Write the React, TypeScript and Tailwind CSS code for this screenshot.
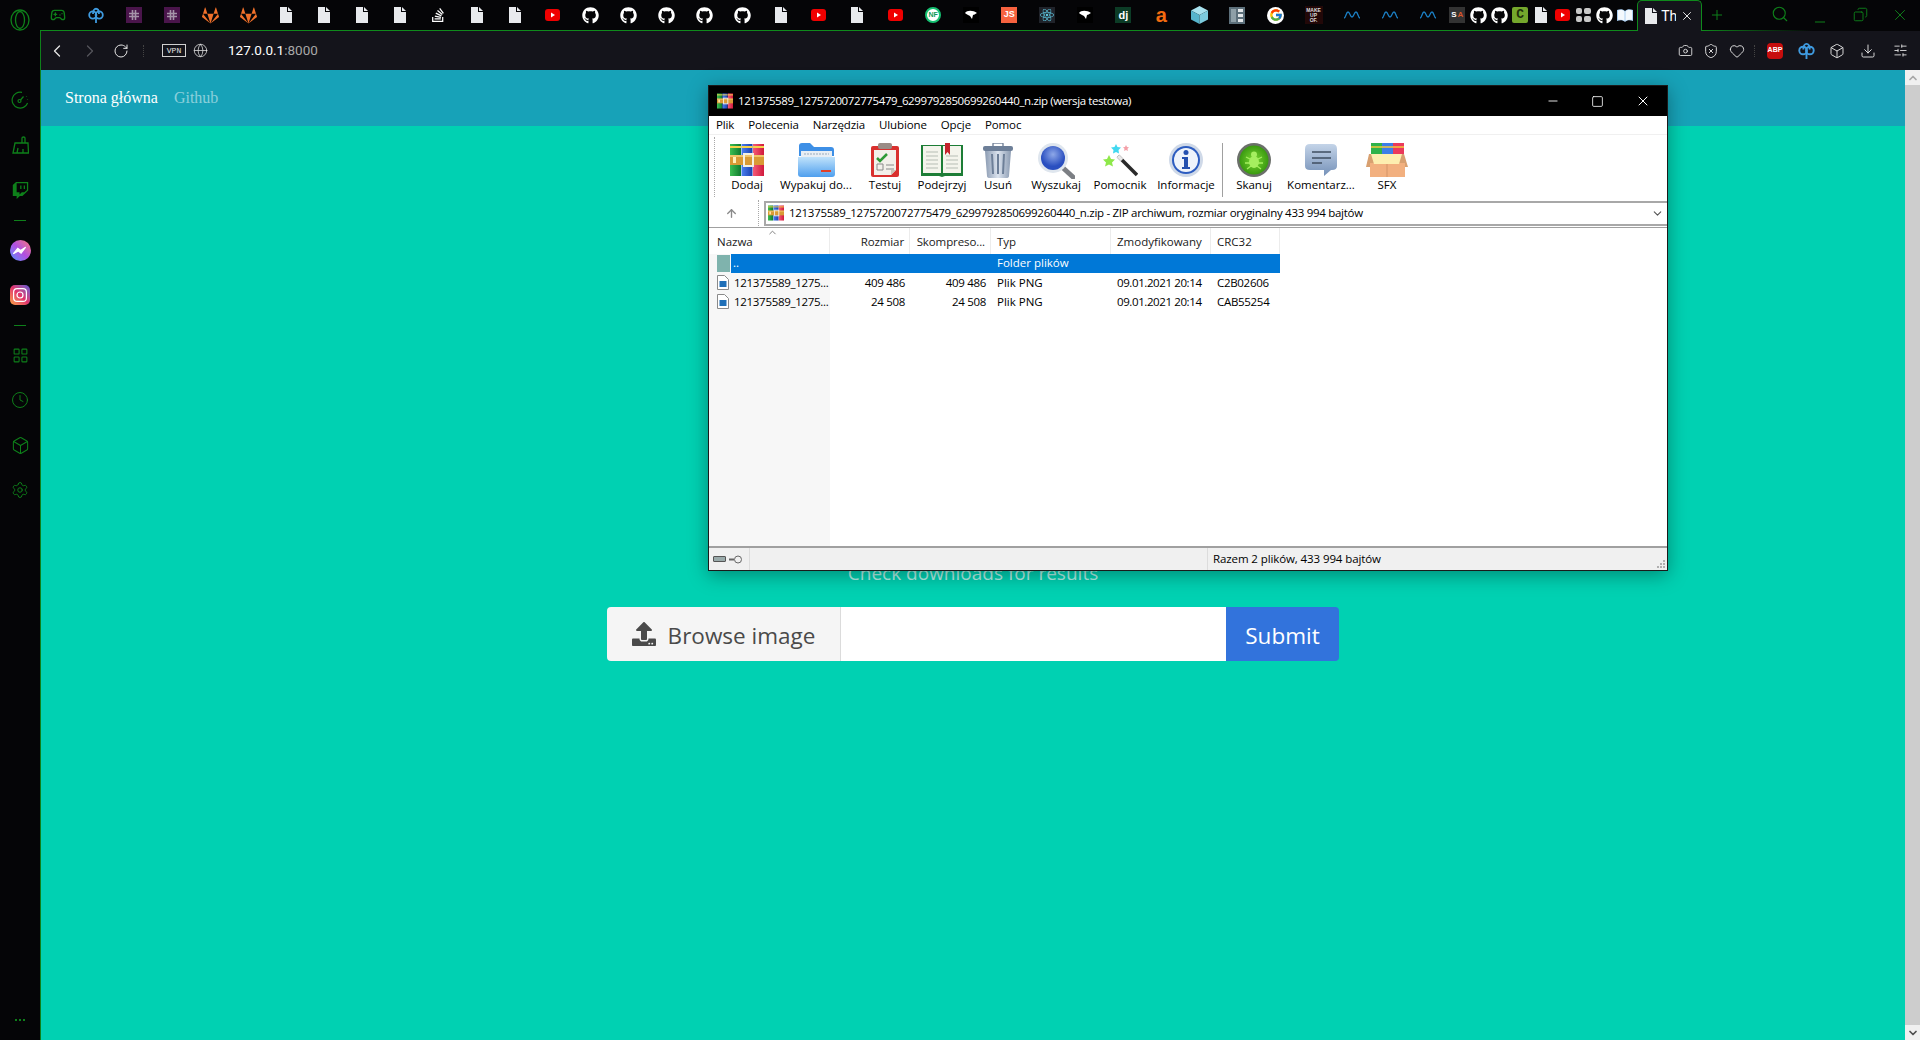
import { Box, ChevronDown, ChevronLeft, ChevronRight, ChevronUp, Clock, Download, Gamepad2, Globe, Heart, LayoutGrid, Minus, Plus, RotateCw, Search, Settings, SlidersHorizontal, ArrowUp, Camera, ShieldX, Square, X, Copy } from 'lucide-react'
import { FaGithub, FaGitlab, FaReact, FaStackOverflow, FaTwitch, FaUpload } from 'react-icons/fa'
import { FcGoogle } from 'react-icons/fc'

const green = '#0e801a'

// ---- small favicons for the tab strip ----

const Doc = () => (
  <svg width="12" height="16" viewBox="0 0 12 16">
    <path d="M0 0h7v5h5v11H0z" fill="#e8eaed" />
    <path d="M8 0l4 4H8z" fill="#e8eaed" />
  </svg>
)

const Yt = () => (
  <svg width="15" height="12" viewBox="0 0 15 12">
    <rect width="15" height="12" rx="3" fill="#f00000" />
    <path d="M6 3.5l4 2.5-4 2.5z" fill="#fff" />
  </svg>
)

const Gh = () => <FaGithub size={17} color="#fff" />

const Slack = () => (
  <div className="flex h-[16px] w-[16px] items-center justify-center bg-[#4a154b]">
    <svg width="10" height="10" viewBox="0 0 10 10" stroke="#a593a8" strokeWidth="1.6">
      <path d="M3.5 0v10M6.5 0v10M0 3.5h10M0 6.5h10" />
    </svg>
  </div>
)

const PCloud = ({ size = 16 }: { size?: number }) => (
  <svg width={size} height={size} viewBox="0 0 16 16" fill="none" stroke="#3f9be0" strokeWidth="1.8">
    <circle cx="4.8" cy="8" r="3.6" />
    <circle cx="11.2" cy="8" r="3.6" />
    <path d="M5 7c0-7 6-7 6 0M8 7v9" />
  </svg>
)

const Bird = () => (
  <div className="flex h-[16px] w-[16px] items-center justify-center bg-black">
    <svg width="12" height="10" viewBox="0 0 12 10">
      <path d="M0 3c2-3 8-3 12 0-2 1-3 2-4 2l-1 4-2-3C3 5 1 4 0 3z" fill="#fff" />
    </svg>
  </div>
)

const Wave = () => (
  <svg width="16" height="8" viewBox="0 0 16 8" fill="none" stroke="#1b7fc4" strokeWidth="1.3">
    <path d="M0 7c2 0 2-6 4-6s2 5 4 5 2-5 4-5 2 6 4 6" />
  </svg>
)

const CubeFav = () => (
  <svg width="17" height="18" viewBox="0 0 17 18">
    <path d="M8.5 0L17 4.500 8.500 9 0 4.500z" fill="#a8e2ee" />
    <path d="M0 4.500L8.500 9v9L0 13.500z" fill="#56b4cc" />
    <path d="M17 4.500L8.500 9v9l8.500-4.500z" fill="#7ccbdd" />
  </svg>
)

const Columns = () => (
  <svg width="16" height="17" viewBox="0 0 16 17">
    <rect width="16" height="17" fill="#5d707b" />
    <rect x="2" y="2" width="5" height="13" fill="#8fa0a8" />
    <rect x="9" y="2" width="5" height="3" fill="#e4e8ea" />
    <rect x="9" y="7" width="5" height="3" fill="#e4e8ea" />
    <rect x="9" y="12" width="5" height="3" fill="#e4e8ea" />
  </svg>
)

const BookFav = () => (
  <svg width="16" height="13" viewBox="0 0 16 13">
    <path d="M0 1c3-1 6-1 8 1 2-2 5-2 8-1v11c-3-1-6-1-8 1-2-2-5-2-8-1z" fill="#a9cdf0" />
    <path d="M1 1.500c3-.7 5-.5 6.500 1v9c-2-1-4-1-6.500-.7zM15 1.500c-3-.7-5-.5-6.500 1v9c2-1 4-1 6.500-.7z" fill="#f4f8fc" />
  </svg>
)

const GridFav = () => (
  <div className="grid h-[14px] w-[15px] grid-cols-2 gap-[2px]">
    <span className="rounded-[2px] bg-[#c8c8c8]" />
    <span className="rounded-[2px] bg-[#c8c8c8]" />
    <span className="rounded-[2px] bg-[#c8c8c8]" />
    <span className="rounded-[2px] bg-[#c8c8c8]" />
  </div>
)

// first part of the strip, evenly spaced
const wideTabs = [
  <Gamepad2 size={16} color={green} />,
  <PCloud />,
  <Slack />,
  <Slack />,
  <FaGitlab size={17} color="#f0702a" />,
  <FaGitlab size={17} color="#f0702a" />,
  <Doc />,
  <Doc />,
  <Doc />,
  <Doc />,
  <FaStackOverflow size={16} color="#fff" />,
  <Doc />,
  <Doc />,
  <Yt />,
  <Gh />,
  <Gh />,
  <Gh />,
  <Gh />,
  <Gh />,
  <Doc />,
  <Yt />,
  <Doc />,
  <Yt />,
  <div className="flex h-[16px] w-[16px] items-center justify-center rounded-full border-2 border-[#16c172] bg-white font-['Liberation_Sans',sans-serif] text-[7px] font-bold text-[#0c9a58]">NF</div>,
  <Bird />,
  <div className="flex h-[16px] w-[16px] items-center justify-center bg-[#f7623f] font-['Liberation_Sans',sans-serif] text-[9px] font-bold text-white">JS</div>,
  <div className="flex h-[16px] w-[16px] items-center justify-center bg-[#20232a]"><FaReact size={14} color="#5cc3dc" /></div>,
  <Bird />,
  <div className="flex h-[16px] w-[16px] items-center justify-center bg-[#0c3c26] font-['Liberation_Sans',sans-serif] text-[11px] font-bold text-white">dj</div>,
  <span className="font-['Liberation_Sans',sans-serif] text-[20px] leading-none font-bold text-[#f26a0f]">a</span>,
  <CubeFav />,
  <Columns />,
  <div className="flex h-[17px] w-[17px] items-center justify-center rounded-full bg-white"><FcGoogle size={14} /></div>,
  <div className="flex h-[18px] w-[18px] items-center justify-center bg-[#220808] text-center font-['Liberation_Sans',sans-serif] text-[5px] leading-[5px] font-bold text-[#ddd]">MAKE<br />UP<br />OF.</div>,
  <Wave />,
  <Wave />,
  <Wave />,
]

// tighter part just before the active tab
const narrowTabs = [
  <div className="flex h-[16px] w-[16px] items-center justify-center bg-[#333] font-['Liberation_Sans',sans-serif] text-[8px] font-bold text-white">S<span className="ml-px text-[#d9552b]">A</span></div>,
  <Gh />,
  <Gh />,
  <div className="flex h-[16px] w-[16px] items-center justify-center rounded-[2px] bg-[#74a72c] font-['Liberation_Mono',monospace] text-[13px] font-bold text-[#20300a]">C</div>,
  <Doc />,
  <Yt />,
  <GridFav />,
  <Gh />,
  <BookFav />,
]

const TabStrip = () => (
  <div className="relative z-10 flex h-[31px] shrink-0 items-start bg-[#050507]">
    <div className="flex h-[30px] items-center -ml-px">
      {wideTabs.map((t, i) => (
        <div key={i} className="flex w-[38.06px] justify-center">{t}</div>
      ))}
    </div>
    <div className="flex h-[30px] items-center">
      {narrowTabs.map((t, i) => (
        <div key={i} className="flex w-[21px] justify-center">{t}</div>
      ))}
    </div>
    {/* active tab, sits on the green line */}
    <div className="ml-[1.500px] flex h-[31px] w-[65px] items-center rounded-t-[5px] border-x border-t border-[#0f8a1c] bg-[#14141b] pl-[7px] text-white">
      <Doc />
      <span className="ml-[4px] w-[15px] overflow-hidden font-['Roboto',sans-serif] text-[14px]">Th</span>
      <X size={14} className="ml-[4px]" strokeWidth={1.5} />
    </div>
    <Plus size={16} color={green} strokeWidth={1.5} className="mt-[7px] ml-[7px]" />
    <Search size={18} color={green} strokeWidth={1.5} className="mt-[5px] ml-[46px]" />
    <Minus size={16} color={green} strokeWidth={1.5} className="mt-[14px] ml-[23px]" />
    <Copy size={15} color={green} strokeWidth={1.5} className="mt-[7px] ml-[24.500px] -scale-x-100" />
    <X size={18} color={green} strokeWidth={1.3} className="mt-[6px] ml-[23.500px]" />
    <div className="absolute bottom-0 left-0 h-px w-[1598px] bg-[#0f8a1c]" />
    <div className="absolute bottom-0 left-[1662px] h-px w-[110px] bg-gradient-to-r from-[#0f8a1c] to-transparent" />
  </div>
)

// ---- left sidebar ----

const Rail = ({ children }: { children: React.ReactNode }) => (
  <div className="flex h-[45px] items-center justify-center">{children}</div>
)

const RailSep = () => (
  <div className="flex h-[15px] items-center justify-center">
    <div className="h-px w-[12px] bg-[#0e801a]" />
  </div>
)

const Sidebar = () => (
  <div className="flex h-full w-[40px] shrink-0 flex-col bg-[#050507]">
    <div className="flex h-[40px] items-center justify-center">
      <svg width="20" height="22" viewBox="0 0 20 22" fill="none" stroke={green} strokeWidth="1.3">
        <ellipse cx="10" cy="11" rx="9" ry="10" />
        <ellipse cx="10" cy="11" rx="4.500" ry="8.500" />
      </svg>
    </div>
    <div className="flex flex-col pt-[37.500px]">
      <Rail>
        <svg width="18" height="18" viewBox="0 0 18 18" fill="none" stroke={green} strokeWidth="1.200">
          <path d="M11 1.300A8 8 0 1 0 16.600 12" />
          <circle cx="8.500" cy="10" r="1.500" />
          <path d="M9.500 9l3-3.500M15.500 5v.6M16.500 8v.6" />
        </svg>
      </Rail>
      <Rail>
        <svg width="17" height="18" viewBox="0 0 17 18" fill="none" stroke={green} strokeWidth="1.300">
          <path d="M10 7V2q0-1 1.500-1T13 2v5M3 7h13l.5 10H1zM6 12l-1 5M11 13v4" />
        </svg>
      </Rail>
      <Rail><FaTwitch size={17} color={green} /></Rail>
      <RailSep />
      <Rail>
        <div className="flex h-[21px] w-[21px] items-center justify-center rounded-full bg-gradient-to-tr from-[#2f8cff] via-[#b14ee0] to-[#ff6e6e]">
          <svg width="14" height="9" viewBox="0 0 12 8"><path d="M0 7l4-5 2.500 2L11 1 7 6.500 4.500 4.500z" fill="#fff" stroke="#fff" /></svg>
        </div>
      </Rail>
      <Rail>
        <div className="flex h-[20px] w-[20px] items-center justify-center rounded-[5px] bg-gradient-to-tr from-[#f9a13a] via-[#e1306c] to-[#5b51d8]">
          <svg width="14" height="14" viewBox="0 0 14 14" fill="none" stroke="#fff" strokeWidth="1.200">
            <rect x=".6" y=".6" width="12.800" height="12.800" rx="3.500" />
            <circle cx="7" cy="7" r="3" />
          </svg>
        </div>
      </Rail>
      <RailSep />
      <Rail><LayoutGrid size={17} color={green} strokeWidth={1.500} /></Rail>
      <Rail><Clock size={18} color={green} strokeWidth={1.300} /></Rail>
      <Rail><Box size={19} color={green} strokeWidth={1.300} /></Rail>
      <Rail><Settings size={18} color={green} strokeWidth={1.300} /></Rail>
    </div>
    <div className="mt-auto mb-[19px] flex justify-center gap-[2px]">
      <span className="h-[2px] w-[2px] bg-[#0e801a]" />
      <span className="h-[2px] w-[2px] bg-[#0e801a]" />
      <span className="h-[2px] w-[2px] bg-[#0e801a]" />
    </div>
  </div>
)

// ---- address bar ----

const AddressBar = () => (
  <div className="flex h-[39px] shrink-0 items-center bg-[#14141b] text-[#e6e6e6]">
    <ChevronLeft size={20} strokeWidth={1.500} className="ml-[6px]" />
    <ChevronRight size={20} strokeWidth={1.500} className="ml-[13px] text-[#55555c]" />
    <RotateCw size={16} strokeWidth={1.500} className="ml-[13px]" />
    <div className="ml-[14px] h-[12px] border-l border-dotted border-[#444]" />
    <div className="ml-[18px] flex h-[13px] w-[24px] items-center justify-center border border-[#d0d0d0] font-['Liberation_Mono',monospace] text-[8px] leading-none">VPN</div>
    <Globe size={15} strokeWidth={1.200} className="ml-[7px]" />
    <div className="ml-[20px] font-['Roboto',sans-serif] text-[13.500px] text-white">127.0.0.1<span className="text-[#a8a8a8]">:8000</span></div>
    <Camera size={15} strokeWidth={1.400} className="ml-auto" />
    <ShieldX size={16} strokeWidth={1.400} className="ml-[10px]" />
    <Heart size={16} strokeWidth={1.400} className="ml-[10px]" />
    <div className="ml-[9px] h-[12px] border-l border-dotted border-[#444]" />
    <div className="ml-[12px] flex h-[16px] w-[16px] items-center justify-center rounded-[4px] bg-[#c70d0d] font-['Liberation_Sans',sans-serif] text-[7px] font-bold text-white">ABP</div>
    <div className="ml-[15px]"><PCloud size={17} /></div>
    <Box size={16} strokeWidth={1.400} className="ml-[14px]" />
    <Download size={16} strokeWidth={1.400} className="ml-[15px]" />
    <SlidersHorizontal size={15} strokeWidth={1.400} className="mr-[12px] ml-[17px]" />
  </div>
)

// ---- winrar toolbar art ----

const RarIcon = ({ size = 34 }: { size?: number }) => (
  <svg width={size} height={size} viewBox="0 0 34 34">
    <rect x="0" y="1" width="11" height="32" fill="url(#bkG)" />
    <rect x="11.500" y="1" width="11" height="32" fill="url(#bkB)" />
    <rect x="23" y="1" width="11" height="32" fill="url(#bkR)" />
    <path d="M0 4h11M11.500 4h11M23 4h11" stroke="#f6d34a" strokeWidth="2" />
    <rect x="0" y="12" width="34" height="10" fill="#d99a35" />
    <rect x="0" y="12" width="34" height="2" fill="#f0c56a" />
    <rect x="14" y="11" width="9" height="12" fill="none" stroke="#f4efe0" strokeWidth="2" />
    <rect x="3" y="14" width="3" height="6" fill="#fff0b8" />
  </svg>
)

const FolderIcon = () => (
  <svg width="37" height="34" viewBox="0 0 37 34">
    <path d="M1 3q0-3 3-3h8l4 4h17q3 0 3 3v6H1z" fill="#3d8fe6" />
    <rect x="3" y="8" width="31" height="12" fill="#e8eef4" />
    <path d="M6 11h25" stroke="#9ab" strokeDasharray="2 1" />
    <path d="M0 14h37v17q0 3-3 3H3q-3 0-3-3z" fill="url(#fld)" />
    <rect x="23" y="27" width="10" height="2" fill="#e0402a" />
  </svg>
)

const TestIcon = () => (
  <svg width="29" height="34" viewBox="0 0 29 34">
    <rect x="0" y="3" width="28" height="31" rx="2" fill="#d9302e" />
    <path d="M3 7h22v20l-5 5H3z" fill="#f3f0ea" />
    <path d="M20 32l5-5h-5z" fill="#c9c4b8" />
    <rect x="7" y="0" width="14" height="6" rx="2" fill="#9a8c86" />
    <path d="M6 15l3 3 7-7" fill="none" stroke="#2e9a36" strokeWidth="2.500" />
    <path d="M6 21h6v6H6zM15 22h8M15 26h8" fill="none" stroke="#8a8a8a" />
  </svg>
)

const BookIcon = () => (
  <svg width="42" height="34" viewBox="0 0 42 34">
    <path d="M0 2h42v31H24l-3 1-3-1H0z" fill="#1d7d36" />
    <rect x="2" y="3" width="18" height="27" fill="#f4f4ec" />
    <rect x="22" y="3" width="18" height="27" fill="#f4f4ec" />
    <path d="M5 9h12M5 13h12M5 17h12M5 21h12M5 25h12M25 13h12M25 17h12M25 21h12M25 25h12" stroke="#b6bdb4" />
    <path d="M24 0h5v12l-2.500-3-2.500 3z" fill="#c4232c" />
  </svg>
)

const TrashIcon = () => (
  <svg width="30" height="35" viewBox="0 0 30 35">
    <rect x="10" y="0" width="10" height="4" rx="1" fill="none" stroke="#7d8ba0" strokeWidth="1.500" />
    <rect x="0" y="3" width="30" height="5" rx="2" fill="#6d7f98" />
    <path d="M2 8h26l-2 25q0 2-3 2H7q-3 0-3-2z" fill="url(#trs)" />
    <path d="M9 11l1 20M15 11v20M21 11l-1 20" stroke="#6d7f98" strokeWidth="2" />
  </svg>
)

const SearchIcon = () => (
  <svg width="37" height="36" viewBox="0 0 37 36">
    <path d="M24 24l11 10" stroke="#7c7f84" strokeWidth="5" strokeLinecap="round" />
    <circle cx="15" cy="15" r="15" fill="#dfe6ee" />
    <circle cx="15" cy="15" r="12" fill="url(#lens)" />
  </svg>
)

const WandIcon = () => (
  <svg width="36" height="34" viewBox="0 0 36 34">
    <path d="M16 13l19 19" stroke="#2a2a2a" strokeWidth="3.500" />
    <path d="M16 13l4 4" stroke="#e8e8e8" strokeWidth="3.500" />
    <path d="M7 12l2 4 4 .5-3 3 1 4-4-2-4 2 1-4-3-3 4-.5z" fill="#8ee84a" />
    <path d="M14 1l1.500 3 3.500.5-2.500 2.500.5 3.500-3-1.500-3 1.500.5-3.500L9 4.500l3.500-.5z" fill="#42d8f0" />
    <path d="M24 2l1 2 2 .3-1.500 1.500.4 2.200-1.900-1-1.900 1 .4-2.200L21 4.300l2-.3z" fill="#f4a0a8" />
  </svg>
)

const InfoIcon = () => (
  <svg width="34" height="34" viewBox="0 0 34 34">
    <circle cx="17" cy="17" r="17" fill="#cfd9e8" />
    <circle cx="17" cy="17" r="14" fill="#2c5cc0" />
    <circle cx="17" cy="17" r="12" fill="#eef3fb" />
    <circle cx="17" cy="9.500" r="2.500" fill="#2450b0" />
    <path d="M13 14h6v10h2v2h-8v-2h2v-8h-2z" fill="#2450b0" />
  </svg>
)

const ScanIcon = () => (
  <svg width="34" height="34" viewBox="0 0 34 34">
    <circle cx="17" cy="17" r="17" fill="#6b6f6a" />
    <circle cx="17" cy="17" r="14.500" fill="url(#scan)" />
    <ellipse cx="17" cy="19" rx="5" ry="6" fill="#a5ef60" />
    <circle cx="17" cy="11.500" r="3" fill="#a5ef60" />
    <path d="M9 14l4 2M25 14l-4 2M8 20h5M26 20h-5M10 26l4-3M24 26l-4-3" stroke="#a5ef60" strokeWidth="1.300" />
  </svg>
)

const CommentIcon = () => (
  <svg width="32" height="33" viewBox="0 0 32 33">
    <path d="M5 1h22q5 0 5 5v17q0 4-5 4H26l-7 6v-6H5q-5 0-5-4V6q0-5 5-5z" fill="url(#cmt)" />
    <path d="M7 9h19M7 15h19M7 20h10" stroke="#3f4d60" strokeWidth="1.500" />
  </svg>
)

const SfxIcon = () => (
  <svg width="42" height="34" viewBox="0 0 42 34">
    <rect x="5" y="0" width="11" height="14" fill="#2fb34a" />
    <rect x="16" y="0" width="11" height="14" fill="#3d7ee8" />
    <rect x="27" y="0" width="11" height="14" fill="#ea3a5c" />
    <path d="M5 4h33" stroke="#f6c93a" strokeWidth="1.500" />
    <path d="M3 11h35l4 13H0z" fill="#d8a070" />
    <rect x="4" y="20" width="35" height="14" fill="#f2b07f" />
    <path d="M21 20v14" stroke="#d49468" />
    <path d="M5 11h31l-3 10H8z" fill="#fdeeb0" />
  </svg>
)

const GradientDefs = () => (
  <svg className="absolute h-0 w-0">
    <defs>
      <linearGradient id="bkG" x1="0" x2="1" y1="0" y2="0"><stop offset="0" stopColor="#3cbf52" /><stop offset="1" stopColor="#0f7a2e" /></linearGradient>
      <linearGradient id="bkB" x1="0" x2="1" y1="0" y2="0"><stop offset="0" stopColor="#4a7ff0" /><stop offset="1" stopColor="#1a3fb0" /></linearGradient>
      <linearGradient id="bkR" x1="0" x2="1" y1="0" y2="0"><stop offset="0" stopColor="#f45a78" /><stop offset="1" stopColor="#d01a3c" /></linearGradient>
      <linearGradient id="fld" x1="0" x2="0" y1="0" y2="1"><stop offset="0" stopColor="#bfe2fb" /><stop offset="1" stopColor="#4f9fee" /></linearGradient>
      <linearGradient id="trs" x1="0" x2="1" y1="0" y2="0"><stop offset="0" stopColor="#8b9bb2" /><stop offset=".5" stopColor="#dbe3ee" /><stop offset="1" stopColor="#8b9bb2" /></linearGradient>
      <radialGradient id="lens" cy=".35"><stop offset="0" stopColor="#8ea8e8" /><stop offset="1" stopColor="#2a4fc0" /></radialGradient>
      <radialGradient id="scan"><stop offset="0" stopColor="#7bd832" /><stop offset="1" stopColor="#3a9a10" /></radialGradient>
      <linearGradient id="cmt" x1="0" x2="0" y1="0" y2="1"><stop offset="0" stopColor="#c4d4e8" /><stop offset="1" stopColor="#7591b8" /></linearGradient>
    </defs>
  </svg>
)

const tools = [
  { label: 'Dodaj', icon: <RarIcon />, width: 'w-[50px]' },
  { label: 'Wypakuj do...', icon: <FolderIcon />, width: 'w-[88px]' },
  { label: 'Testuj', icon: <TestIcon />, width: 'w-[50px]' },
  { label: 'Podejrzyj', icon: <BookIcon />, width: 'w-[64px]' },
  { label: 'Usuń', icon: <TrashIcon />, width: 'w-[48px]' },
  { label: 'Wyszukaj', icon: <SearchIcon />, width: 'w-[68px]' },
  { label: 'Pomocnik', icon: <WandIcon />, width: 'w-[60px]' },
  { label: 'Informacje', icon: <InfoIcon />, width: 'w-[72px]' },
]

const tools2 = [
  { label: 'Skanuj', icon: <ScanIcon />, width: 'w-[62px]' },
  { label: 'Komentarz...', icon: <CommentIcon />, width: 'w-[72px]' },
  { label: 'SFX', icon: <SfxIcon />, width: 'w-[60px]' },
]

const ToolButton = ({ label, icon, width }: { label: string; icon: React.ReactNode; width: string }) => (
  <div className={`flex flex-col items-center ${width}`}>
    <div className="flex h-[33px] items-start">{icon}</div>
    <span className="whitespace-nowrap">{label}</span>
  </div>
)

const FileGlyph = () => (
  <svg width="12" height="15" viewBox="0 0 12 15">
    <path d="M.5.500h7l4 4v10H.5z" fill="#fff" stroke="#8a8a8a" />
    <rect x="2.500" y="6" width="7" height="6" fill="#1f6fb8" />
  </svg>
)

const rows = [
  { name: '121375589_1275...', size: '409 486', packed: '409 486', crc: 'C2B02606' },
  { name: '121375589_1275...', size: '24 508', packed: '24 508', crc: 'CAB55254' },
]

const cols = 'grid grid-cols-[121px_80px_81px_120px_100px_69px] w-[571px]'

const RarWindow = () => (
  <div className="absolute top-[85px] left-[708px] z-20 flex h-[486px] w-[960px] flex-col border border-[#1a1a1a] bg-white font-['Open_Sans',sans-serif] text-[11.500px] text-black shadow-[0_4px_18px_rgba(0,0,0,0.35)]">
    <div className="flex h-[30px] shrink-0 items-center bg-black pl-[8px] text-white">
      <RarIcon size={16} />
      <span className="ml-[5px] tracking-[-0.39px]">121375589_1275720072775479_6299792850699260440_n.zip (wersja testowa)</span>
      <Minus size={14} strokeWidth={1.500} className="ml-auto" />
      <Square size={13} strokeWidth={1.500} className="ml-[31px]" />
      <X size={16} strokeWidth={1.500} className="mr-[16px] ml-[31px]" />
    </div>
    <div className="flex h-[19px] shrink-0 items-center gap-[14px] border-b border-[#f0f0f0] pl-[7px] tracking-[-0.12px]">
      <span>Plik</span>
      <span>Polecenia</span>
      <span>Narzędzia</span>
      <span>Ulubione</span>
      <span>Opcje</span>
      <span>Pomoc</span>
    </div>
    <div className="flex h-[65px] shrink-0 items-start pt-[8px] pl-[5px]">
      <div className="mt-[-6px] h-[60px] w-[8px] border-l border-dotted border-[#a8a8a8]" />
      {tools.map((t) => <ToolButton key={t.label} {...t} />)}
      <div className="h-[54px] w-px bg-[#a0a0a0]" />
      {tools2.map((t) => <ToolButton key={t.label} {...t} />)}
    </div>
    <div className="flex h-[26px] shrink-0 items-center">
      <ArrowUp size={13} strokeWidth={2.500} className="ml-[16px] text-[#8a8a8a]" />
      <div className="ml-[20px] h-full w-[6px] border-l border-dotted border-[#a8a8a8]" />
      <div className="flex h-[25px] flex-1 items-center border-2 border-r-0 border-[#a8a8a8] pl-[2px]">
        <RarIcon size={16} />
        <span className="ml-[5px] tracking-[-0.29px]">121375589_1275720072775479_6299792850699260440_n.zip - ZIP archiwum, rozmiar oryginalny 433 994 bajtów</span>
        <ChevronDown size={13} className="mr-[3px] ml-auto text-[#555]" />
      </div>
    </div>
    <div className="mt-[1px] flex flex-1 flex-col border-t border-[#a0a0a0] bg-[linear-gradient(90deg,#f7f7f7_121px,#fff_121px)]">
      <div className="relative h-[26px] shrink-0 bg-white">
        <ChevronUp size={11} className="absolute -top-px left-[58px] text-[#777]" />
        <div className={`${cols} h-full items-center text-[#1a1a1a]`}>
          <span className="h-full border-r border-[#ececec] pt-[5px] pl-[8px]">Nazwa</span>
          <span className="h-full border-r border-[#ececec] pt-[5px] pr-[5px] text-right tracking-[-0.1px]">Rozmiar</span>
          <span className="h-full border-r border-[#ececec] pt-[5px] pr-[5px] text-right tracking-[-0.1px]">Skompreso...</span>
          <span className="h-full border-r border-[#ececec] pt-[5px] pl-[6px]">Typ</span>
          <span className="h-full border-r border-[#ececec] pt-[5px] pl-[6px]">Zmodyfikowany</span>
          <span className="h-full border-r border-[#ececec] pt-[5px] pl-[6px]">CRC32</span>
        </div>
      </div>
      <div className={`${cols} h-[19px] items-center`}>
        <div className="flex h-full">
          <div className="mt-px ml-[8px] h-[17px] w-[13px] bg-[#7fb3ad]" />
          <span className="ml-px flex-1 bg-[#0078d7] pl-[2px] text-white">..</span>
        </div>
        <span className="col-span-2 h-full bg-[#0078d7]" />
        <span className="h-full bg-[#0078d7] pl-[6px] text-white">Folder plików</span>
        <span className="col-span-2 h-full bg-[#0078d7]" />
      </div>
      {rows.map((r) => (
        <div key={r.crc} className={`${cols} h-[19px] items-center tracking-[-0.3px]`}>
          <div className="flex items-center pl-[8px]">
            <FileGlyph />
            <span className="ml-[5px] whitespace-nowrap">{r.name}</span>
          </div>
          <span className="pr-[5px] text-right">{r.size}</span>
          <span className="pr-[5px] text-right">{r.packed}</span>
          <span className="pl-[6px] tracking-normal">Plik PNG</span>
          <span className="pl-[6px] whitespace-nowrap tracking-[-0.4px]">09.01.2021 20:14</span>
          <span className="pl-[6px]">{r.crc}</span>
        </div>
      ))}
    </div>
    <div className="flex h-[24px] shrink-0 items-center border-t-2 border-[#a0a0a0] bg-[#f0f0f0]">
      <div className="flex h-full w-[41px] items-center gap-[3px] border-r border-[#dcdcdc] pl-[4px]">
        <div className="h-[6px] w-[13px] rounded-[1px] border border-[#555] bg-[#9aa]" />
        <svg width="13" height="9" viewBox="0 0 13 9" fill="none" stroke="#666"><circle cx="9" cy="4.500" r="3.500" /><path d="M0 4.500h5" strokeWidth="2" /></svg>
      </div>
      <div className="ml-[457px] flex h-full items-center border-l border-[#dcdcdc] pl-[5px] tracking-[-0.1px]">Razem 2 plików, 433 994 bajtów</div>
      <svg width="8" height="8" viewBox="0 0 8 8" fill="#b0b0b0" className="mt-[10px] mr-[2px] ml-auto">
        <path d="M6 0h2v2H6zM3 3h2v2H3zM6 3h2v2H6zM0 6h2v2H0zM3 6h2v2H3zM6 6h2v2H6z" />
      </svg>
    </div>
  </div>
)

// ---- page behind the window ----

const Page = () => (
  <div className="flex min-w-0 flex-1 flex-col bg-[#00d1b2] font-['Open_Sans',sans-serif]">
    <div className="flex h-[56px] shrink-0 items-center gap-[16px] bg-[#17a2b8] pl-[24px] font-['Liberation_Serif',serif] text-[16px]">
      <span className="text-white">Strona główna</span>
      <span className="text-white/50">Github</span>
    </div>
    <div className="flex flex-col items-center pt-[432px]">
      <p className="text-[19px] leading-[30px] text-white/70">Check downloads for results</p>
      <div className="mt-[19px] flex h-[54px] w-[732px] overflow-hidden rounded-[4px] text-[22.500px]">
        <div className="flex w-[234px] items-center justify-center gap-[12px] border-r border-[#dbdbdb] bg-[#f5f5f5] text-[#4a4a4a]">
          <FaUpload size={24} />
          <span className="pt-[3px]">Browse image</span>
        </div>
        <div className="flex-1 bg-white" />
        <div className="flex w-[113px] items-center justify-center bg-[#3273dc] pt-[3px] text-white">Submit</div>
      </div>
    </div>
  </div>
)

const Scrollbar = () => (
  <div className="flex w-[15px] shrink-0 flex-col bg-[#cdcdcd]">
    <div className="flex h-[15px] items-center justify-center bg-[#f0f0f0]">
      <ChevronUp size={12} strokeWidth={3.500} className="text-[#a8a8a8]" />
    </div>
    <div className="flex-1" />
    <div className="flex h-[15px] items-center justify-center bg-[#f0f0f0]">
      <ChevronDown size={12} strokeWidth={3.500} className="text-[#505050]" />
    </div>
  </div>
)

export default function App() {
  return (
    <div className="relative flex h-[1040px] w-[1920px] overflow-hidden bg-[#050507]">
      <GradientDefs />
      <Sidebar />
      <div className="flex min-w-0 flex-1 flex-col">
        <TabStrip />
        <div className="flex flex-1 flex-col border-l border-[#0e801a]">
          <AddressBar />
          <div className="flex min-h-0 flex-1">
            <Page />
            <Scrollbar />
          </div>
        </div>
      </div>
      <RarWindow />
    </div>
  )
}
